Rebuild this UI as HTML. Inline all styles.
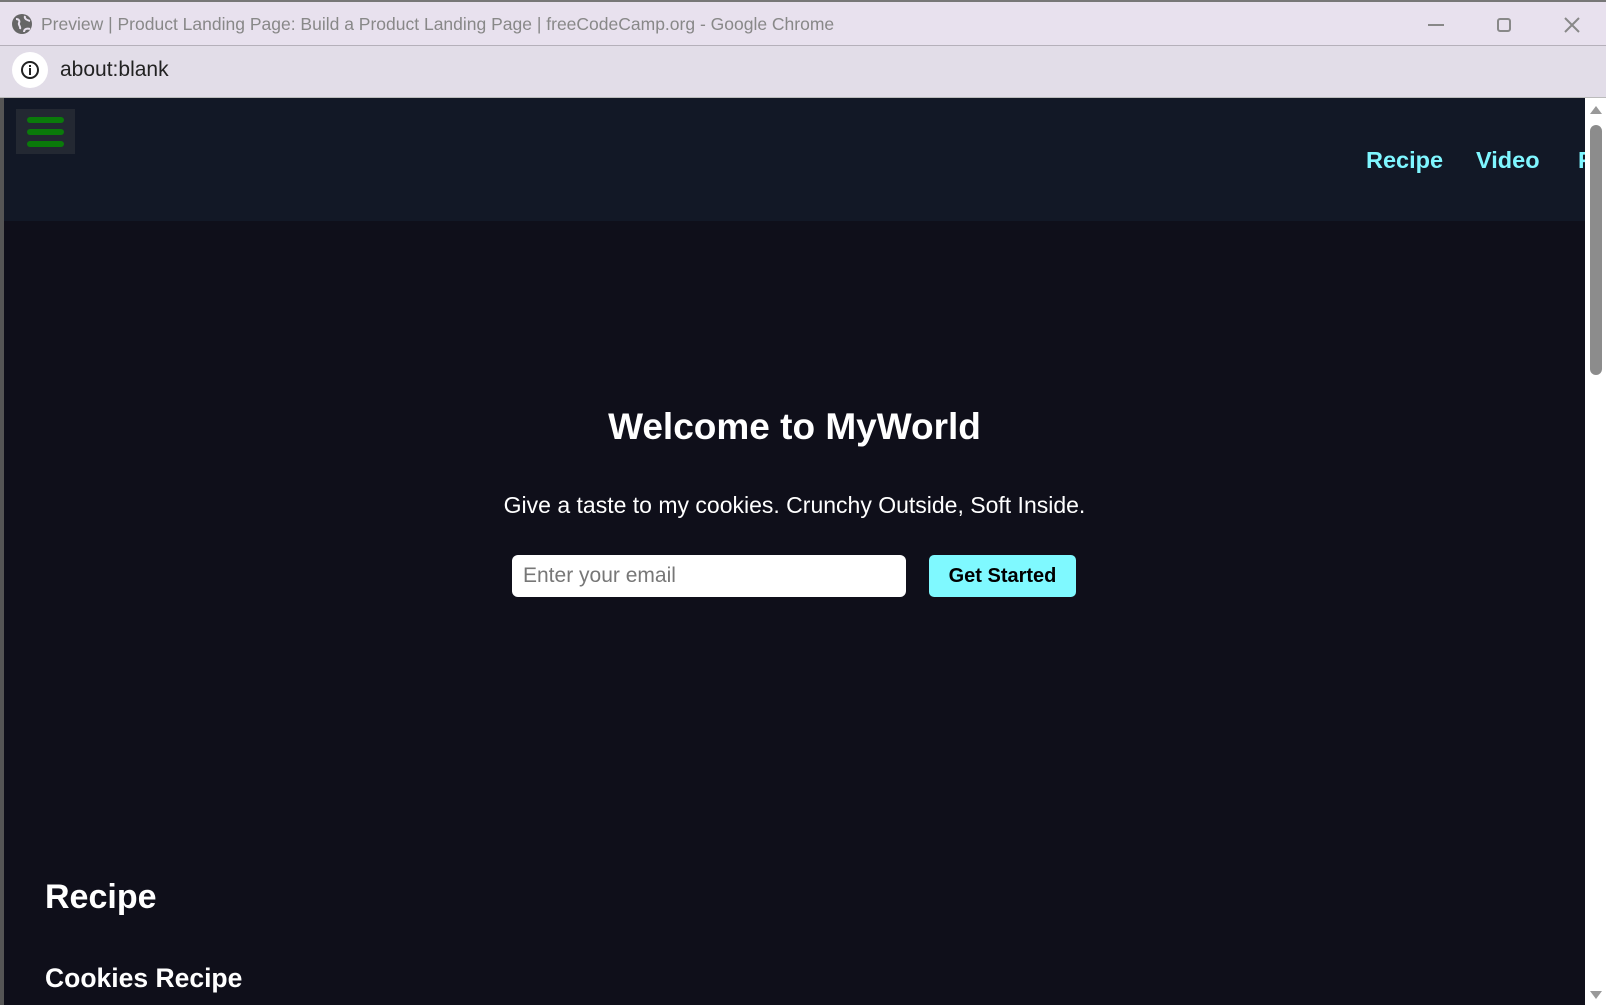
<!DOCTYPE html>
<html><head><style>
*{margin:0;padding:0;box-sizing:border-box}
body{width:1606px;height:1005px;overflow:hidden;background:#0f0f1a;font-family:"Liberation Sans",sans-serif;position:relative}
.tb{position:absolute;left:0;top:0;width:1606px;height:46px;background:#e8e1ee;border-top:2px solid #777;border-bottom:1px solid #b5b0ba}
.tb .t{position:absolute;left:41px;top:12px;font-size:17.5px;color:#888}
.ab{position:absolute;left:0;top:46px;width:1606px;height:52px;background:#e2dde8;border-bottom:1px solid #bbb}
.ab .c{position:absolute;left:12px;top:6px;width:36px;height:36px;border-radius:50%;background:#fff}
.ab .u{position:absolute;left:60px;top:12px;font-size:21px;color:#222}
.left{position:absolute;left:0;top:98px;width:4px;height:907px;background:#555}
.nav{position:absolute;left:4px;top:98px;width:1581px;height:123px;background:#121826}
.ham{position:absolute;left:16px;top:109px;width:59px;height:45px;background:#232832}
.ham i{position:absolute;left:11px;width:37px;height:6px;border-radius:3px;background:#0a7a0a}
.nav a{position:absolute;top:49px;font-size:23.5px;font-weight:bold;color:#7ff6ff;text-decoration:none}
.sb{position:absolute;left:1585px;top:98px;width:21px;height:907px;background:#fff}
.sb .th{position:absolute;left:5px;top:27px;width:12px;height:250px;border-radius:6px;background:#8c8c8c}
h1{position:absolute;left:0;width:1589px;top:406px;text-align:center;color:#fff;font-size:37px}
.sub{position:absolute;left:0;width:1589px;top:492px;text-align:center;color:#fff;font-size:23px}
.in{position:absolute;left:512px;top:555px;width:394px;height:42px;background:#fff;border-radius:6px;font-size:21px;color:#777;padding:9px 11px}
.btn{position:absolute;left:929px;top:555px;width:147px;height:42px;background:#7ff9ff;border-radius:5px;font-size:20px;font-weight:bold;color:#000;text-align:center;line-height:42px}
h2{position:absolute;left:45px;top:878px;color:#fff;font-size:34px}
h3{position:absolute;left:45px;top:963px;color:#fff;font-size:26.5px}
</style></head><body>
<div class="tb"><svg style="position:absolute;left:11px;top:11px" width="22" height="22" viewBox="0 0 22 22"><circle cx="11" cy="11" r="10" fill="#666"/><path d="M5 6c3 0 4 2 3 4s2 3 1 6M14 3c-1 3 2 4 5 5M13 19c0-3 3-4 6-3" stroke="#e8e1ee" stroke-width="2" fill="none"/></svg><span class="t">Preview | Product Landing Page: Build a Product Landing Page | freeCodeCamp.org - Google Chrome</span>
<div style="position:absolute;left:1428px;top:22px;width:16px;height:2px;background:#888"></div>
<div style="position:absolute;left:1497px;top:16px;width:14px;height:14px;border:2px solid #888;border-radius:3px"></div>
<svg style="position:absolute;left:1564px;top:15px" width="16" height="16"><path d="M1 1L15 15M15 1L1 15" stroke="#888" stroke-width="2"/></svg></div>
<div class="ab"><div class="c"><svg width="36" height="36"><circle cx="18" cy="18" r="8" stroke="#222" stroke-width="2" fill="none"/><rect x="17" y="16" width="2" height="7" fill="#222"/><rect x="17" y="13" width="2" height="2" fill="#222"/></svg></div><span class="u">about:blank</span></div>
<div class="left"></div>
<div class="nav"><a style="left:1362px">Recipe</a><a style="left:1472px">Video</a><a style="left:1574px">F</a></div>
<div class="ham"><i style="top:8px"></i><i style="top:20px"></i><i style="top:32px"></i></div>
<div class="sb"><svg style="position:absolute;left:4px;top:7px" width="14" height="10"><path d="M7 1L13 9H1Z" fill="#999"/></svg><div class="th"></div><svg style="position:absolute;left:4px;top:892px" width="14" height="10"><path d="M1 1H13L7 9Z" fill="#999"/></svg></div>
<h1>Welcome to MyWorld</h1>
<div class="sub">Give a taste to my cookies. Crunchy Outside, Soft Inside.</div>
<div class="in">Enter your email</div>
<div class="btn">Get Started</div>
<h2>Recipe</h2>
<h3>Cookies Recipe</h3>
</body></html>
